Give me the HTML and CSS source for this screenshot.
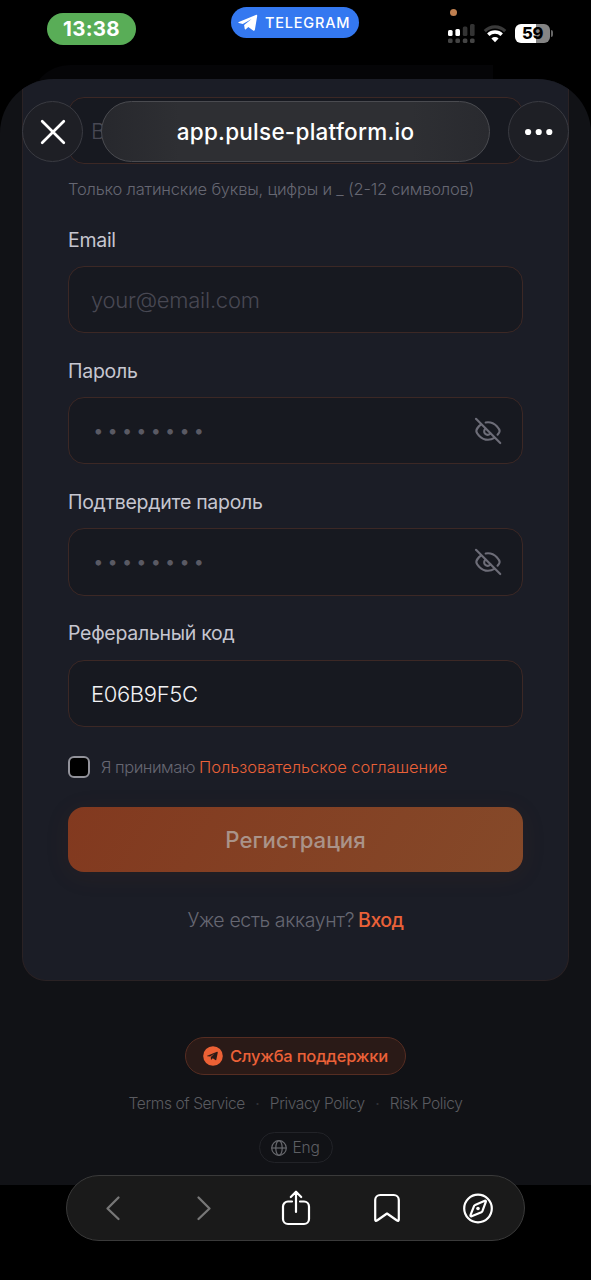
FILE: index.html
```html
<!DOCTYPE html>
<html lang="ru">
<head>
<meta charset="utf-8">
<title>app.pulse-platform.io</title>
<link rel="stylesheet" href="styles.css">
</head>
<body>
<div class="screen">
  <header class="status">
    <div class="clock">13:38</div>
    <div class="island">
      <svg width="20" height="18" viewBox="0 0 20 18"><path d="M.8 8 17.800.9c1-.4 1.600.1 1.400 1.100L16.900 15.700c-.2 1-1 1.300-1.800.7L10.300 12.900l-2.400 2.300c-.5.5-1.100.3-1.200-.4L6.100 10.900 13.600 4.900 4.800 10.100.8 9c-.7-.2-.7-.7 0-1z" fill="#fff"/></svg>
      <span>TELEGRAM</span>
    </div>
    <div class="signals">
      <i class="mic-dot"></i>
      <svg class="cell" width="28" height="20" viewBox="0 0 28 20">
        <g fill="#fff"><rect x="0" y="6" width="4.600" height="6" rx="1.500"/><rect x="7.400" y="5" width="4.600" height="7" rx="1.500"/></g>
        <g fill="#333"><rect x="14.800" y="2.500" width="4.600" height="9.500" rx="1.500"/><rect x="22" y="0" width="4.600" height="12" rx="1.500"/></g>
        <g fill="#444"><rect x="0" y="14.500" width="4.600" height="4.600" rx="1.500"/><rect x="7.400" y="14.500" width="4.600" height="4.600" rx="1.500"/><rect x="14.800" y="14.500" width="4.600" height="4.600" rx="1.500"/><rect x="22" y="14.500" width="4.600" height="4.600" rx="1.500"/></g>
      </svg>
      <svg class="wifi" width="24" height="18" viewBox="0 0 24 18" fill="none">
        <path d="M1.800 6.200a14.400 14.400 0 0 1 20.400 0" stroke="#3a3a3a" stroke-width="3.200"/>
        <path d="M5.300 9.800a9.500 9.500 0 0 1 13.400 0" stroke="#fff" stroke-width="3.400"/>
        <path d="M12 17.200 8.400 13.600a5.100 5.100 0 0 1 7.200 0z" fill="#fff"/>
      </svg>
      <div class="battery"><span>59</span></div>
    </div>
  </header>

  <div class="back-sheet"></div>

  <main class="sheet">
    <section class="card">
      <div class="field first"><span class="placeholder">В</span></div>
      <p class="hint">Только латинские буквы, цифры и _ (2-12 символов)</p>

      <div class="label t-email">Email</div>
      <div class="field"><span class="placeholder">your@email.com</span></div>

      <div class="label t-pass">Пароль</div>
      <div class="field">
        <span class="dots"><i>•</i><i>•</i><i>•</i><i>•</i><i>•</i><i>•</i><i>•</i><i>•</i></span>
        <svg class="eye" width="28" height="28" viewBox="0 0 24 24"><use href="#eye-off"/></svg>
      </div>

      <div class="label t-pass2">Подтвердите пароль</div>
      <div class="field">
        <span class="dots"><i>•</i><i>•</i><i>•</i><i>•</i><i>•</i><i>•</i><i>•</i><i>•</i></span>
        <svg class="eye" width="28" height="28" viewBox="0 0 24 24"><use href="#eye-off"/></svg>
      </div>

      <div class="label t-ref">Реферальный код</div>
      <div class="field"><span class="value">E06B9F5C</span></div>

      <div class="agree">
        <i class="box"></i>
        <span class="agree-text">Я принимаю</span>
        <span class="agree-link">Пользовательское соглашение</span>
      </div>
      <div class="submit"><span>Регистрация</span></div>
      <div class="login"><span class="ask">Уже есть аккаунт?</span><span class="enter">Вход</span></div>
    </section>

    <footer class="footer">
      <div class="support">
        <svg width="20" height="20" viewBox="0 0 20 20"><circle cx="10" cy="10" r="9.800" fill="#ec6135"/><path d="M4.200 9.700 14 5.700c.5-.2.900.1.800.7l-1.500 7.300c-.1.500-.5.700-1 .4l-2.500-1.800-1.300 1.200c-.3.300-.6.200-.6-.2l-.1-2.400 3.800-3.300-4.500 2.800-2.800-.2c-.4-.1-.4-.4-.1-.5z" fill="#2d1b17"/></svg>
        <span>Служба поддержки</span>
      </div>
      <nav class="links"><span class="l1">Terms of Service</span><b>·</b><span class="l2">Privacy Policy</span><b>·</b><span class="l3">Risk Policy</span></nav>
      <div class="lang">
        <svg width="16" height="16" viewBox="0 0 16 16" fill="none" stroke="#68696e" stroke-width="1.200"><circle cx="8" cy="8" r="7.300"/><ellipse cx="8" cy="8" rx="3.200" ry="7.300"/><path d="M.7 8h14.600"/></svg>
        <span>Eng</span>
      </div>
    </footer>
  </main>

  <div class="topbar">
    <div class="round"><svg width="26" height="26" viewBox="0 0 26 26" stroke="#fff" stroke-width="2.700" stroke-linecap="round"><path d="M2.200 2.200l21.600 21.600M23.800 2.200 2.200 23.800"/></svg></div>
    <div class="address"><span>app.pulse-platform.io</span></div>
    <div class="round"><svg width="28" height="8" viewBox="0 0 28 8" fill="#fff"><circle cx="3.100" cy="4" r="3.100"/><circle cx="13.700" cy="4" r="3.100"/><circle cx="24.300" cy="4" r="3.100"/></svg></div>
  </div>

  <div class="toolbar">
    <svg width="32" height="40" viewBox="0 0 32 40" fill="none" stroke="#777" stroke-width="2.300" stroke-linecap="round" stroke-linejoin="round"><path d="M21.500 9.500 10.500 20.500l11 10.500"/></svg>
    <svg width="32" height="40" viewBox="0 0 32 40" fill="none" stroke="#777" stroke-width="2.300" stroke-linecap="round" stroke-linejoin="round"><path d="M10.500 9.500 21.500 20.500l-11 10.500"/></svg>
    <svg width="32" height="40" viewBox="0 0 32 40" fill="none" stroke="#fff" stroke-width="2.200" stroke-linecap="round" stroke-linejoin="round"><path d="M12 13.500H8a5 5 0 0 0-5 5V31a5 5 0 0 0 5 5h16a5 5 0 0 0 5-5V18.500a5 5 0 0 0-5-5H20M16 24V4M10.800 9 16 3.700 21.200 9"/></svg>
    <svg width="32" height="40" viewBox="0 0 32 40" fill="none" stroke="#fff" stroke-width="2.200" stroke-linecap="round" stroke-linejoin="round"><path d="M4.200 12a5 5 0 0 1 5-5h13.600a5 5 0 0 1 5 5v19.800c0 1.200-.9 1.500-1.800.7L16 25.500 6 32.500c-.9.800-1.800.5-1.800-.7z"/></svg>
    <svg width="32" height="40" viewBox="0 0 32 40" fill="none" stroke="#fff" stroke-width="2.200" stroke-linejoin="round"><circle cx="16" cy="20.500" r="13.800"/><path d="M23.700 12.800c.4.300.3.700.1 1.100l-3.400 9.300c-.2.500-.5.800-1 1l-9.800 4c-.8.300-1.400-.2-1.100-1l3.600-9.300c.2-.5.500-.8 1-1l9.700-4.200c.3-.1.700-.1.900.1z"/><circle cx="16" cy="20.500" r="1.800" fill="#fff" stroke="none"/></svg>
  </div>
</div>

<svg width="0" height="0" class="defs"><symbol id="eye-off" viewBox="0 0 24 24"><g fill="none" stroke="#6d6d78" stroke-width="1.800" stroke-linecap="round" stroke-linejoin="round"><path d="M10 4.700a10.500 10.500 0 0 1 2-.2c6.800 0 10 6.500 10 7.500 0 .6-.6 1.900-1.800 3.200"/><path d="M6.200 6.400C3.500 8.200 2 11 2 12c0 1.200 3.500 7.500 10 7.500 2.100 0 3.900-.6 5.400-1.600"/><path d="M1.700 1.500l20.800 20.800"/><path d="M9.900 9.900a3 3 0 1 0 4.200 4.200"/></g></symbol></svg>
</body>
</html>
```
FILE: styles.css
```css
* { box-sizing: border-box; }
body { margin: 0; background: #000; font-family: Inter, "Liberation Sans", sans-serif; }
i, b { font-style: normal; font-weight: 400; }
svg { display: block; flex: none; }
span, .label, .hint { white-space: nowrap; }
.defs { position: absolute; }

.screen { position: relative; width: 591px; height: 1280px; overflow: hidden; background: #000; }

/* Status bar */
.status { display: grid; grid-template-columns: 185px 1fr 185px; height: 79px; }
.clock { width: 89px; height: 32px; margin: 13px 0 0 47px; border-radius: 16px; background: #59ad57; color: #fff; font-size: 20.5px; font-weight: 650; line-height: 32px; text-align: center; letter-spacing: .3px; }
.island { display: flex; align-items: center; gap: 7px; justify-self: center; width: 128px; height: 31px; margin-top: 7px; margin-right: 1px; padding-left: 7px; border-radius: 16px; background: #3478f0; color: #fff; font-size: 14.5px; font-weight: 500; letter-spacing: .8px; }
.signals { position: relative; display: flex; padding: 24px 0 0 42px; }
.mic-dot { position: absolute; left: 44px; top: 9px; width: 7px; height: 7px; border-radius: 50%; background: #c08050; }
.wifi { margin: 1px 0 0 7px; }
.battery { position: relative; width: 35px; height: 19px; margin-left: 8px; border-radius: 6px; background: linear-gradient(90deg, #fff 59%, #858585 59%); color: #000; font-size: 16.5px; font-weight: 800; line-height: 19px; text-align: center; letter-spacing: -.3px; }
.battery::after { content: ""; position: absolute; right: -3px; top: 6px; width: 2px; height: 7px; border-radius: 0 2px 2px 0; background: #666; }

/* Web view */
.back-sheet { position: absolute; left: 30px; top: 65px; width: 463px; height: 40px; border-radius: 44px 0 0 0; background: #050507; }
.sheet { position: relative; height: 1106px; padding: 0 22px; border-radius: 54px 54px 0 0; background: #111216; overflow: hidden; }
.card { height: 902px; padding: 18px 45px 0; border: 1px solid #2a2224; border-top: 0; border-radius: 0 0 24px 24px; background: #1b1d26; }
.field { display: flex; align-items: center; height: 67.300px; padding: 0 20px 0 22px; border: 1.500px solid #3c2825; border-radius: 16px; background: #171920; }
.placeholder { color: #484853; font-size: 22px; font-weight: 300; letter-spacing: -.25px; }
.value { padding-top: 2px; color: #f2f2f4; font-size: 22px; font-weight: 300; letter-spacing: -.35px; }
.hint { height: 28px; margin: 10.700px 0 22.600px; color: #666772; font-size: 16.500px; font-weight: 300; line-height: 28px; letter-spacing: -.2px; }
.label { height: 28px; margin: 23.500px 0 12.400px; color: #c6c6d0; font-size: 19.500px; line-height: 28px; letter-spacing: -.28px; }
.hint + .label { margin-top: 0; }
.dots { display: flex; flex: 1; }
.dots i { width: 14.400px; color: #5a5a64; font-size: 18px; line-height: 24px; text-align: center; }

.agree { display: flex; align-items: center; height: 24px; margin-top: 28px; font-size: 16.500px; font-weight: 300; }
.box { width: 22px; height: 22px; margin-right: 11px; border: 2px solid #92929a; border-radius: 6px; background: #000; }
.agree-text { width: 98px; color: #666772; letter-spacing: -.5px; }
.agree-link { color: #ea6138; letter-spacing: -.03px; }
.submit { height: 65px; margin-top: 28px; border-radius: 16px; background: linear-gradient(120deg, #82391f, #854929); box-shadow: 0 4px 24px rgba(130, 57, 31, .1); color: #aa9389; font-size: 22.200px; font-weight: 500; line-height: 66px; text-align: center; }
.login { display: flex; justify-content: center; gap: 4px; margin-top: 34.500px; font-size: 19.500px; line-height: 28px; }
.ask { color: #666772; font-weight: 300; letter-spacing: -.35px; }
.enter { color: #ea6138; font-weight: 500; letter-spacing: -.5px; }

.footer { display: flex; flex-direction: column; align-items: center; padding-top: 56px; }
.support { display: flex; align-items: center; gap: 7px; width: 221px; height: 38px; padding-left: 17px; border: 1px solid #562d22; border-radius: 19px; background: #2a1a17; color: #ea6138; font-size: 16.500px; font-weight: 500; letter-spacing: -.23px; }
.links { display: flex; margin-top: 18px; color: #5a5b60; font-size: 15.500px; font-weight: 300; line-height: 22px; letter-spacing: -.4px; }
.links b { width: 25px; color: #303136; text-align: center; }
.lang { display: flex; align-items: center; gap: 6px; width: 74px; height: 31px; margin-top: 17px; padding-left: 11px; border: 1px solid #222328; border-radius: 16px; color: #5e5f64; font-size: 15.500px; font-weight: 300; letter-spacing: -.2px; }

/* Floating browser controls */
.topbar { position: absolute; left: 22px; right: 22px; top: 101px; display: flex; justify-content: space-between; }
.round { display: flex; align-items: center; justify-content: center; width: 61px; height: 61px; border: 1px solid #3a3b42; border-radius: 50%; background: #1e1f25; }
.address { width: 389px; height: 61px; border: 1px solid #4a4b50; border-radius: 31px; background: linear-gradient(90deg, #27282d, #2e2f33 20%, #2e2f33 80%, #292a2f); color: #fff; font-size: 22.500px; font-weight: 550; line-height: 60px; text-align: center; letter-spacing: .25px; }
.toolbar { position: absolute; left: 66px; top: 1175px; display: flex; align-items: center; justify-content: space-between; width: 459px; height: 66px; padding: 0 30px; border: 1px solid #3a3a3a; border-radius: 33px; background: #1a1a1a; }
```
